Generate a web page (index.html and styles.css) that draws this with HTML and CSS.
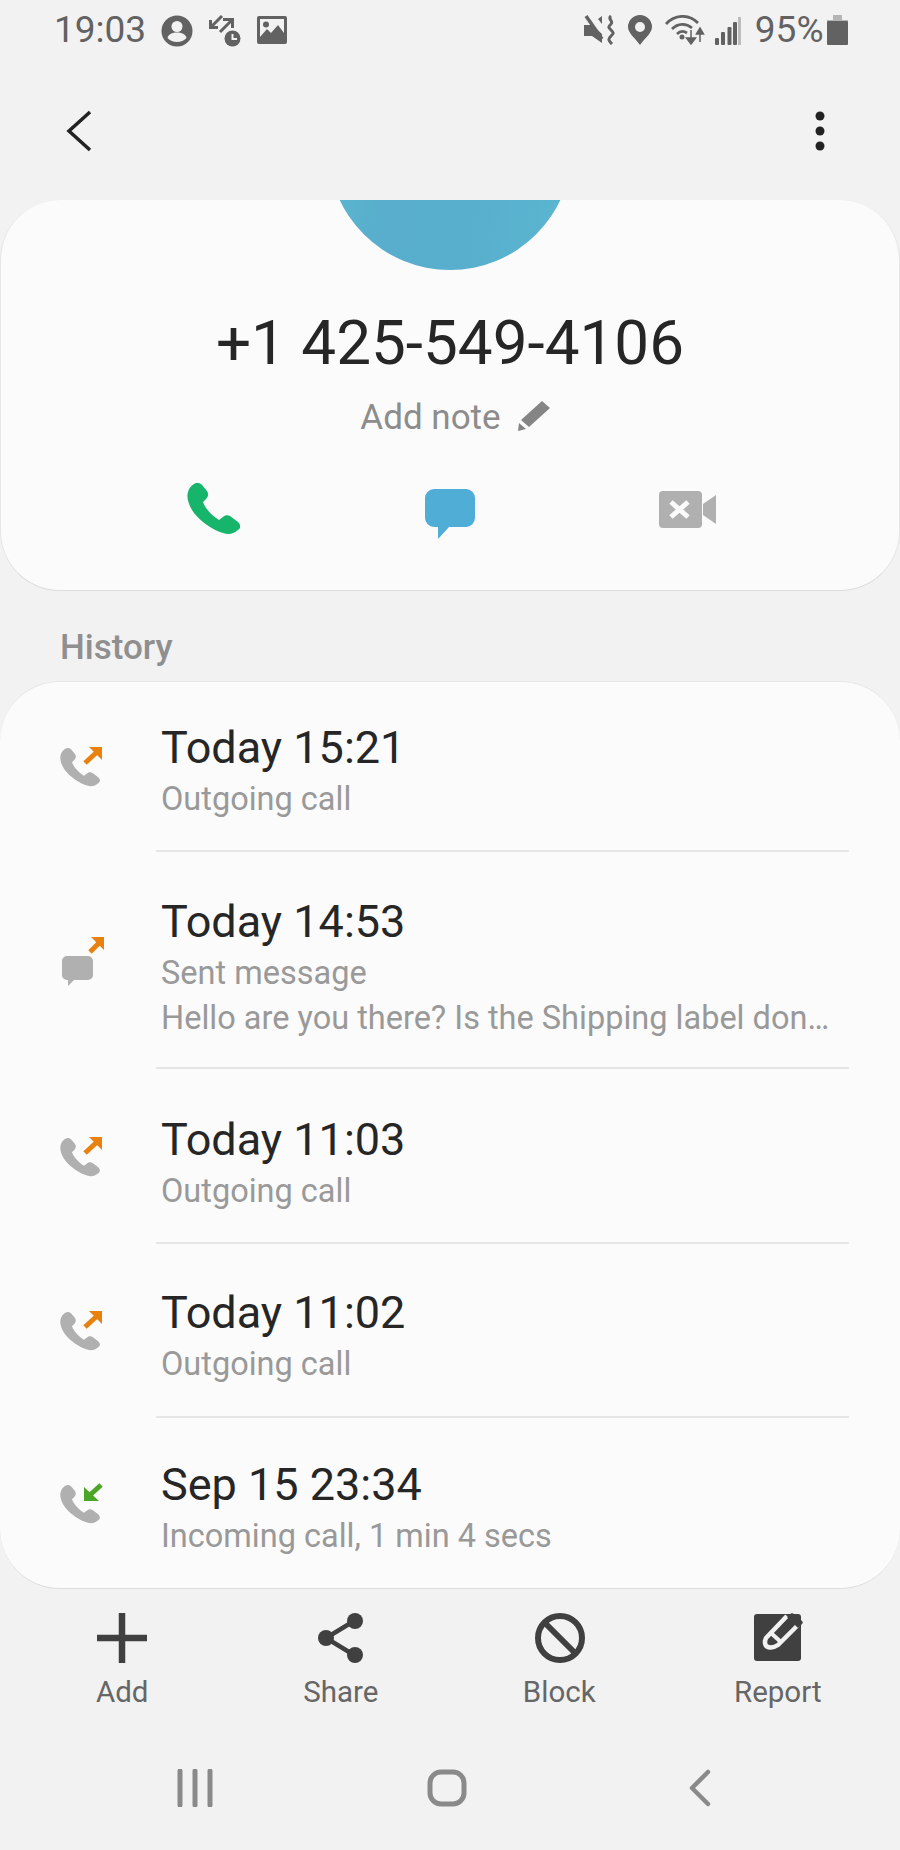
FILE: index.html
```html
<!DOCTYPE html>
<html lang="en">
<head>
<meta charset="utf-8">
<title>Call details</title>
<link rel="stylesheet" href="styles.css">
</head>
<body>
<svg class="defs" width="0" height="0" aria-hidden="true">
  <defs>
    <path id="phone" d="M7 1C10 -1 13 0 15 2L20 8C22 11 21 14 19 16L16 19C18 25 25 33 32 37L36 34C38 32 41 32 43 33L51 39C54 42 54 45 51 47C46 51 42 52 36 50C26 47 14 39 7 30C2 23 -1 15 1 9C2 5 4 3 7 1Z"/>
  </defs>
</svg>
<div class="page">
  <header class="status">
    <div class="status-left">
      <span class="time">19:03</span>
      <svg class="ic-person" viewBox="0 0 32 32"><circle cx="16" cy="16" r="15.5" fill="#626262"/><circle cx="16" cy="11.5" r="5.5" fill="#f2f2f2"/><path d="M6.5 23c1-4 5-5.5 9.500-5.500s8.500 1.500 9.500 5.500c-2.500 2.500-5.500 4-9.500 4s-7-1.500-9.500-4z" fill="#f2f2f2"/></svg>
      <svg class="ic-transfer" viewBox="0 0 32 32"><g fill="none" stroke="#626262" stroke-width="3"><path d="M13 1L3 11"/><path d="M1.500 5V12.500H9"/><path d="M11 17L22 6"/><path d="M14 4.500H23.500V13"/></g><circle cx="23.500" cy="23.500" r="8" fill="#626262"/><path d="M23.500 19V24H28" fill="none" stroke="#f2f2f2" stroke-width="2"/></svg>
      <svg class="ic-image" viewBox="0 0 30 28"><rect width="30" height="28" rx="2" fill="#626262"/><path d="M3 3H27V17L21 9L14 17L10 13L3 21Z" fill="#f2f2f2"/><circle cx="9" cy="8.500" r="3" fill="#626262"/></svg>
    </div>
    <div class="status-right">
      <svg class="ic-mute" viewBox="0 0 31 30"><path d="M0 10H8L18 19V28L8 21H0Z" fill="#626262"/><path d="M2 1L18 24" stroke="#626262" stroke-width="3.500"/><path d="M14 4L18 1V9Z" fill="#626262"/><path d="M27 1C23 4 30 6 27 9S24 12 27 15S30 18 27 21S24 25 28 29" fill="none" stroke="#626262" stroke-width="3"/></svg>
      <svg class="ic-pin" viewBox="0 0 24 30"><path d="M12 30C7 23 0 18 0 12a12 12 0 0 1 24 0C24 18 17 23 12 30Z" fill="#626262"/><circle cx="12" cy="12" r="5" fill="#f2f2f2"/></svg>
      <svg class="ic-wifi" viewBox="0 0 40 30"><g fill="none" stroke="#626262" stroke-width="2.800"><path d="M1 9C10 -1 24 -1 33 8"/><path d="M7 14C13 8 21 8 27 13"/><path d="M12 19C15 16 19 16 22 18"/></g><circle cx="17" cy="22" r="2.500" fill="#626262"/><path d="M26 15V26M21.500 23L26 29L30.500 23Z" fill="#626262" stroke="#626262" stroke-width="1.500"/><path d="M35 27V15M31.500 19L35 13L38.500 19Z" fill="#626262" stroke="#626262" stroke-width="1.500"/></svg>
      <svg class="ic-signal" viewBox="0 0 26 28"><g fill="#626262"><rect y="21" width="4" height="7" rx="1"/><rect x="6" y="15" width="4" height="13" rx="1"/><rect x="12.500" y="10" width="4" height="18" rx="1"/><rect x="18" y="5" width="4" height="23" rx="1"/></g><rect x="23" width="3" height="28" fill="#bdbdbd"/></svg>
      <span class="battery-pct">95%</span>
      <svg class="ic-battery" viewBox="0 0 21 30"><path d="M6 0H15V5H6Z" fill="#b5b5b5"/><path d="M0 5H21V6H0Z" fill="#b5b5b5"/><rect y="6" width="21" height="24" rx="1" fill="#626262"/></svg>
    </div>
  </header>

  <nav class="toolbar">
    <svg class="ic-back" viewBox="0 0 26 42"><path d="M24 2L3 21L24 40" fill="none" stroke="#222" stroke-width="3.500"/></svg>
    <svg class="ic-more" viewBox="0 0 10 40"><circle cx="5" cy="5" r="4.500" fill="#222"/><circle cx="5" cy="20" r="4.500" fill="#222"/><circle cx="5" cy="35" r="4.500" fill="#222"/></svg>
  </nav>

  <section class="card contact">
    <div class="avatar"></div>
    <h1 class="number">+1 425-549-4106</h1>
    <div class="note">
      <span>Add note</span>
      <svg class="ic-pencil" viewBox="0 0 32 30"><path d="M24 0L32 7L11 26L3 19Z" fill="#858585"/><path d="M1 22L8 28L0 30Z" fill="#858585"/></svg>
    </div>
    <div class="actions">
      <svg class="ic-call" viewBox="0 0 53 51"><use href="#phone" fill="#17b46b"/></svg>
      <svg class="ic-msg" viewBox="0 0 50 50"><path d="M9 0H41A9 9 0 0 1 50 9V29A9 9 0 0 1 41 38H24L13 50V38H9A9 9 0 0 1 0 29V9A9 9 0 0 1 9 0Z" fill="#4fadd6"/></svg>
      <svg class="ic-video" viewBox="0 0 57 37"><rect width="43" height="37" rx="4" fill="#b0b0b0"/><path d="M44 13L57 4V33L44 24Z" fill="#b0b0b0"/><path d="M12 11L29 26M29 11L12 26" stroke="#fbfbfb" stroke-width="5"/></svg>
    </div>
  </section>

  <h2 class="history-label">History</h2>

  <section class="card history">
    <article class="row first">
      <div class="row-icon">
        <svg class="ic-log" viewBox="0 0 48 42"><use href="#phone" fill="#b0b0b0" transform="translate(1 2) scale(.75)"/><path d="M26 17L38 6" stroke="#e8810f" stroke-width="5"/><path d="M30 1H43V14Z" fill="#e8810f"/></svg>
      </div>
      <div class="row-body">
        <p class="title">Today 15:21</p>
        <p class="sub">Outgoing call</p>
      </div>
    </article>
    <article class="row">
      <div class="row-icon">
        <svg class="ic-log" viewBox="0 0 48 52"><path d="M8 21H29A5 5 0 0 1 34 26V40A5 5 0 0 1 29 45H15L9 51V45H8A5 5 0 0 1 3 40V26A5 5 0 0 1 8 21Z" fill="#b0b0b0"/><path d="M31 17L41 7" stroke="#e8810f" stroke-width="5"/><path d="M32 2H45V15Z" fill="#e8810f"/></svg>
      </div>
      <div class="row-body">
        <p class="title">Today 14:53</p>
        <p class="sub">Sent message</p>
        <p class="sub msg-line">Hello are you there? Is the Shipping label don…</p>
      </div>
    </article>
    <article class="row tall">
      <div class="row-icon">
        <svg class="ic-log" viewBox="0 0 48 42"><use href="#phone" fill="#b0b0b0" transform="translate(1 2) scale(.75)"/><path d="M26 17L38 6" stroke="#e8810f" stroke-width="5"/><path d="M30 1H43V14Z" fill="#e8810f"/></svg>
      </div>
      <div class="row-body">
        <p class="title">Today 11:03</p>
        <p class="sub">Outgoing call</p>
      </div>
    </article>
    <article class="row short">
      <div class="row-icon">
        <svg class="ic-log" viewBox="0 0 48 42"><use href="#phone" fill="#b0b0b0" transform="translate(1 2) scale(.75)"/><path d="M26 17L38 6" stroke="#e8810f" stroke-width="5"/><path d="M30 1H43V14Z" fill="#e8810f"/></svg>
      </div>
      <div class="row-body">
        <p class="title">Today 11:02</p>
        <p class="sub">Outgoing call</p>
      </div>
    </article>
    <article class="row last">
      <div class="row-icon">
        <svg class="ic-log" viewBox="0 0 48 42"><use href="#phone" fill="#b0b0b0" transform="translate(1 3) scale(.75)"/><path d="M42 3L31 13" stroke="#4ba526" stroke-width="5"/><path d="M25 5V19H40Z" fill="#4ba526"/></svg>
      </div>
      <div class="row-body">
        <p class="title">Sep 15 23:34</p>
        <p class="sub">Incoming call, 1 min 4 secs</p>
      </div>
    </article>
  </section>

  <footer class="bottom-bar">
    <div class="bar-item">
      <svg class="bar-icon" viewBox="0 0 50 50"><path d="M25 0V50M0 25H50" stroke="#404040" stroke-width="6.500"/></svg>
      <span>Add</span>
    </div>
    <div class="bar-item">
      <svg class="bar-icon" viewBox="0 0 50 50"><path d="M38 8L10 25L38 42" fill="none" stroke="#404040" stroke-width="4.500"/><circle cx="39" cy="8" r="8" fill="#404040"/><circle cx="10" cy="25" r="8" fill="#404040"/><circle cx="39" cy="42" r="8" fill="#404040"/></svg>
      <span>Share</span>
    </div>
    <div class="bar-item">
      <svg class="bar-icon shift" viewBox="0 0 50 50"><circle cx="25" cy="25" r="22" fill="none" stroke="#404040" stroke-width="6"/><path d="M10 10L40 40" stroke="#404040" stroke-width="6"/></svg>
      <span>Block</span>
    </div>
    <div class="bar-item">
      <svg class="bar-icon shift" viewBox="0 0 50 50"><rect y="1" width="47" height="47" rx="3" fill="#404040"/><path d="M33 3L12 25C10 29 11 33 14 34C17 35 21 34 24 32L44 12" fill="none" stroke="#f2f2f2" stroke-width="4.500" stroke-linejoin="round"/><path d="M17 20L28 30" stroke="#f2f2f2" stroke-width="4"/><path d="M37 0.500C38 0 39 0 40 1L48 8C49 9 49 10 48 11L44 15L33 4Z" fill="#404040"/></svg>
      <span>Report</span>
    </div>
  </footer>

  <div class="nav-bar">
    <svg class="ic-recents" viewBox="0 0 36 38"><path d="M3 2V36M18 2V36M33 2V36" stroke="#8a8a8a" stroke-width="5" stroke-linecap="round"/></svg>
    <svg class="ic-home" viewBox="0 0 40 38"><rect x="3" y="3" width="34" height="32" rx="11" fill="none" stroke="#8a8a8a" stroke-width="5"/></svg>
    <svg class="ic-navback" viewBox="0 0 22 38"><path d="M19 3L3 19L19 35" fill="none" stroke="#8a8a8a" stroke-width="4.500" stroke-linecap="round" stroke-linejoin="round"/></svg>
  </div>
</div>
</body>
</html>
```

FILE: styles.css
```css
* { box-sizing: border-box; }
html, body { margin: 0; padding: 0; }
body { background: #f2f2f2; font-family: Roboto, "Liberation Sans", sans-serif; }
p, h1, h2 { margin: 0; font-weight: 400; }
svg { display: block; flex: none; }
.defs { position: absolute; }

.page { width: 900px; height: 1850px; display: flex; flex-direction: column; overflow: hidden; }

/* Status bar */
.status { height: 60px; display: flex; justify-content: space-between; align-items: flex-start; padding: 9px 52px 0 54px; color: #626262; }
.status-left, .status-right { display: flex; align-items: flex-start; }
.time, .battery-pct { font-size: 37px; line-height: 42px; }
.ic-person { width: 32px; height: 32px; margin: 6px 0 0 15px; }
.ic-transfer { width: 32px; height: 32px; margin: 6px 0 0 16px; }
.ic-image { width: 30px; height: 28px; margin: 7px 0 0 16px; }
.ic-mute { width: 31px; height: 30px; margin-top: 6px; }
.ic-pin { width: 24px; height: 30px; margin: 6px 0 0 13px; }
.ic-wifi { width: 40px; height: 30px; margin: 6px 0 0 13px; }
.ic-signal { width: 26px; height: 28px; margin: 8px 0 0 10px; }
.battery-pct { margin-left: 14px; }
.ic-battery { width: 21px; height: 30px; margin: 6px 0 0 3.500px; }

/* Toolbar */
.toolbar { height: 140px; display: flex; justify-content: space-between; align-items: flex-start; padding: 50px 75px 0 66px; }
.ic-back { width: 26px; height: 42px; }
.ic-more { width: 10px; height: 40px; margin-top: 1px; }

/* Cards */
.card { background: #fbfbfb; border-radius: 60px; border-bottom: 1px solid #dedede; overflow: hidden; }
.contact { height: 391px; display: flex; flex-direction: column; align-items: center; border-left: 1px solid #e6e6e6; border-right: 1px solid #e6e6e6; }
.avatar { width: 244px; height: 244px; border-radius: 50%; margin-top: -174px; flex: none; background: linear-gradient(100deg, #5bbad2 0%, #58aecc 30%, #57aecd 60%, #5bb7d0 100%); }
.number { font-size: 62px; line-height: 72px; color: #262626; margin-top: 37px; }
.note { display: flex; align-items: center; margin-top: 17px; padding-left: 10px; font-size: 35px; line-height: 44px; color: #8c8c8c; }
.ic-pencil { width: 32px; height: 30px; margin: -4px 0 0 17px; }
.actions { width: 100%; display: grid; grid-template-columns: repeat(3, 237px); justify-content: center; justify-items: center; align-items: start; margin-top: 43px; }
.ic-call { width: 53px; height: 51px; }
.ic-msg { width: 50px; height: 50px; margin-top: 6px; }
.ic-video { width: 57px; height: 37px; margin-top: 8px; }

.history-label { height: 90px; padding: 39px 0 0 60px; font-size: 35px; line-height: 36px; font-weight: 500; color: #8f8f8f; }

/* History */
.history { height: 908px; border-top: 1px solid #e6e6e6; }
.row { display: flex; }
.row-icon { width: 156px; padding-left: 59px; display: flex; align-items: center; }
.ic-log { width: 48px; }
.row-body { flex: 1; min-width: 0; margin-right: 51px; padding: 43px 0 28px 5px; border-bottom: 2px solid #e6e6e6; }
.row.first .row-body { padding-top: 39px; padding-bottom: 27px; }
.row.tall .row-body { padding-top: 44px; padding-bottom: 27px; }
.row.short .row-body { padding-top: 42px; padding-bottom: 28px; }
.row.last .row-body { padding-top: 40px; border-bottom: 0; }
.title { font-size: 45px; line-height: 54px; color: #262626; }
.sub { font-size: 32.5px; line-height: 48px; color: #999; }
.msg-line { line-height: 42px; white-space: nowrap; }

/* Bottom bar */
.bottom-bar { display: grid; grid-template-columns: repeat(4, 218.5px); padding: 24px 13px 0; }
.bar-item { display: flex; flex-direction: column; align-items: center; font-size: 29.5px; line-height: 36px; color: #666; }
.bar-icon { width: 50px; height: 50px; margin-bottom: 11px; }
.bar-icon.shift { margin-left: 2px; }

/* Navigation bar */
.nav-bar { display: grid; grid-template-columns: repeat(3, 252.500px); justify-content: center; justify-items: center; align-items: center; margin-top: 59px; padding-right: 6px; }
.ic-recents { width: 36px; height: 38px; }
.ic-home { width: 40px; height: 38px; }
.ic-navback { width: 22px; height: 38px; }
```
